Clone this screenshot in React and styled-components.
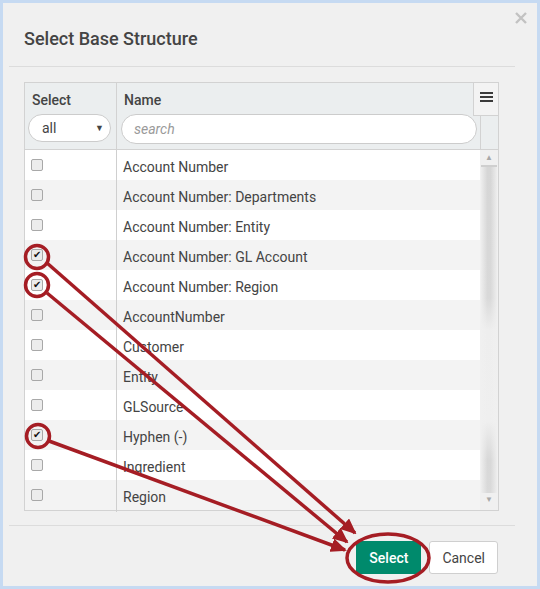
import React from "react"
import styled, { createGlobalStyle } from "styled-components"

const rows = [
  { name: "Account Number" },
  { name: "Account Number: Departments" },
  { name: "Account Number: Entity" },
  { name: "Account Number: GL Account", checked: true },
  { name: "Account Number: Region", checked: true },
  { name: "AccountNumber" },
  { name: "Customer" },
  { name: "Entity" },
  { name: "GLSource" },
  { name: "Hyphen (-)", checked: true },
  { name: "Ingredient" },
  { name: "Region" },
]

export default function App() {
  return (
    <>
      <GlobalStyle />
      <Page>
        <Dialog>
          <Close>
            <svg width="12" height="12" viewBox="0 0 12 12">
              <path d="M1 1L11 11M11 1L1 11" stroke="#c2c2c2" strokeWidth="2.4" />
            </svg>
          </Close>
          <Title>Select Base Structure</Title>
          <Divider />
          <Body>
            <Grid>
              <Header>
                <HeadCell>
                  <Label>Select</Label>
                  <Dropdown>
                    all
                    <Caret>▼</Caret>
                  </Dropdown>
                </HeadCell>
                <HeadCell $name>
                  <Label>Name</Label>
                  <Search placeholder="search" />
                </HeadCell>
                <HeadSpacer />
                <MenuButton>
                  <svg width="13" height="10" viewBox="0 0 13 10">
                    <path d="M0 1H13M0 5H13M0 9H13" stroke="#3a3a3a" strokeWidth="2" />
                  </svg>
                </MenuButton>
              </Header>
              <Rows>
                <List>
                  {rows.map((r, i) => (
                    <Row key={r.name} $alt={i % 2 === 1}>
                      <CheckCell>
                        <Box>{r.checked && <Tick>✔</Tick>}</Box>
                      </CheckCell>
                      <NameCell>{r.name}</NameCell>
                    </Row>
                  ))}
                </List>
                <Scrollbar>
                  <Arrow>▲</Arrow>
                  <Track />
                  <Arrow>▼</Arrow>
                </Scrollbar>
              </Rows>
            </Grid>
          </Body>
          <Divider />
          <Footer>
            <Button $primary>Select</Button>
            <Button>Cancel</Button>
          </Footer>
        </Dialog>
        <Marks width="540" height="589" viewBox="0 0 540 589">
          <defs>
            <marker id="head" markerUnits="userSpaceOnUse" markerWidth="16" markerHeight="14" refX="14" refY="7" orient="auto">
              <path d="M0 0L16 7L0 14Z" fill="#a51d24" />
            </marker>
          </defs>
          <g fill="none" stroke="#a51d24" strokeWidth="3.5">
            <circle cx="37" cy="257" r="11.5" />
            <circle cx="37" cy="285" r="11.5" />
            <circle cx="38" cy="436" r="11.5" />
            <ellipse cx="388" cy="558" rx="41" ry="24" />
            <path d="M47 263L355 533" markerEnd="url(#head)" />
            <path d="M47 293L347 542" markerEnd="url(#head)" />
            <path d="M49 441L345 550" markerEnd="url(#head)" />
          </g>
        </Marks>
      </Page>
    </>
  )
}

const GlobalStyle = createGlobalStyle`
  html, body {
    margin: 0;
    padding: 0;
    background: #c6daf2;
  }
  body {
    font-family: Roboto, "Liberation Sans", sans-serif;
    color: #444;
  }
  * {
    box-sizing: border-box;
  }
`
const Page = styled.div`
  position: relative;
  width: 540px;
  height: 589px;
  padding: 3px;
`
const Dialog = styled.div`
  position: relative;
  width: 534px;
  height: 583px;
  background: #f0f0f0;
  display: flex;
  flex-direction: column;
`
const Close = styled.div`
  position: absolute;
  top: 9px;
  right: 10px;
  display: flex;
`
const Title = styled.h1`
  margin: 0;
  height: 63px;
  padding: 25px 0 0 21px;
  font-size: 18px;
  font-weight: 500;
  line-height: 22px;
  color: #444;
`
const Divider = styled.div`
  height: 1px;
  margin: 0 22px 0 6px;
  background: #dcdcdc;
`
const Body = styled.div`
  padding: 15px 0 14px 21px;
`
const Grid = styled.div`
  position: relative;
  width: 475px;
  border: 1px solid #d2d2d2;
  background: #fff;
`
const Header = styled.div`
  display: grid;
  grid-template-columns: 92px 363px 18px;
  height: 67px;
  background: #ebeeef;
  border-bottom: 1px solid #d2d2d2;
`
const HeadCell = styled.div`
  display: flex;
  flex-direction: column;
  padding: 9px 4px 0 4px;
  border-right: ${(p) => (p.$name ? "none" : "1px solid #d2d2d2")};
`
const HeadSpacer = styled.div`
  border-left: 1px solid #d2d2d2;
`
const Label = styled.div`
  font-size: 14px;
  font-weight: 500;
  line-height: 17px;
  color: #444;
  padding-left: 3px;
  margin-bottom: 5px;
`
const Dropdown = styled.div`
  display: flex;
  align-items: center;
  justify-content: space-between;
  width: 83px;
  height: 28px;
  padding: 0 6px 0 13px;
  background: #fff;
  border: 1px solid #ccc;
  border-radius: 14px;
  font-size: 14px;
  color: #444;
  margin-left: -1px;
`
const Caret = styled.span`
  font-size: 9px;
  color: #444;
`
const Search = styled.input`
  width: 356px;
  height: 30px;
  padding: 0 12px;
  border: 1px solid #ccc;
  border-radius: 15px;
  background: #fff;
  font-family: Roboto, "Liberation Sans", sans-serif;
  font-size: 14px;
  outline: none;
  &::placeholder {
    color: #9a9a9a;
    font-style: italic;
  }
`
const MenuButton = styled.div`
  position: absolute;
  top: 0;
  right: 0;
  width: 25px;
  height: 33px;
  background: #f3f3f3;
  border-left: 1px solid #d2d2d2;
  border-bottom: 1px solid #d2d2d2;
  display: flex;
  justify-content: center;
  padding-top: 9px;
`
const Rows = styled.div`
  display: flex;
`
const List = styled.div`
  flex: 1;
`
const Row = styled.div`
  display: grid;
  grid-template-columns: 92px 1fr;
  height: 30px;
  background: ${(p) => (p.$alt ? "#f3f3f3" : "#fff")};
`
const CheckCell = styled.div`
  border-right: 1px solid #cfcfcf;
  padding: 9px 0 0 6px;
`
const Box = styled.div`
  position: relative;
  width: 12px;
  height: 12px;
  border: 1px solid #a8a8a8;
  border-radius: 2px;
  background: #ececec;
`
const Tick = styled.span`
  position: absolute;
  left: 1px;
  top: -2px;
  font-size: 10px;
  line-height: 14px;
  color: #111;
  font-weight: bold;
  font-family: "DejaVu Sans", sans-serif;
`
const NameCell = styled.div`
  padding: 2px 0 0 6px;
  font-size: 14px;
  line-height: 30px;
  color: #444;
`
const Scrollbar = styled.div`
  width: 18px;
  display: flex;
  flex-direction: column;
  align-items: center;
  background: #f0f0f0;
  padding: 1px 0 3px;
`
const Arrow = styled.div`
  font-size: 8px;
  color: #a8a8a8;
  height: 14px;
  line-height: 14px;
`
const Track = styled.div`
  flex: 1;
  width: 16px;
  border-top: 2px solid #cfcfcf;
  background: linear-gradient(
      to right,
      rgba(240, 240, 240, 0.9),
      rgba(240, 240, 240, 0) 40%,
      rgba(240, 240, 240, 0) 60%,
      rgba(240, 240, 240, 0.9)
    ),
    linear-gradient(
      to bottom,
      #d6d6d6 0%,
      #d9d9d9 40%,
      #eeeeee 50%,
      #efefef 78%,
      #d8d8d8 90%,
      #dadada 100%
    );
`
const Footer = styled.div`
  display: flex;
  justify-content: flex-end;
  gap: 8px;
  padding: 15px 39px 0 0;
`
const Button = styled.div`
  height: 33px;
  padding: 0 12px;
  display: flex;
  align-items: center;
  border-radius: 3px;
  font-size: 14px;
  background: ${(p) => (p.$primary ? "#008a6c" : "#fff")};
  color: ${(p) => (p.$primary ? "#fff" : "#444")};
  border: 1px solid ${(p) => (p.$primary ? "#008a6c" : "#cfcfcf")};
  font-weight: ${(p) => (p.$primary ? 500 : 400)};
`
const Marks = styled.svg`
  position: absolute;
  top: 0;
  left: 0;
  pointer-events: none;
`
